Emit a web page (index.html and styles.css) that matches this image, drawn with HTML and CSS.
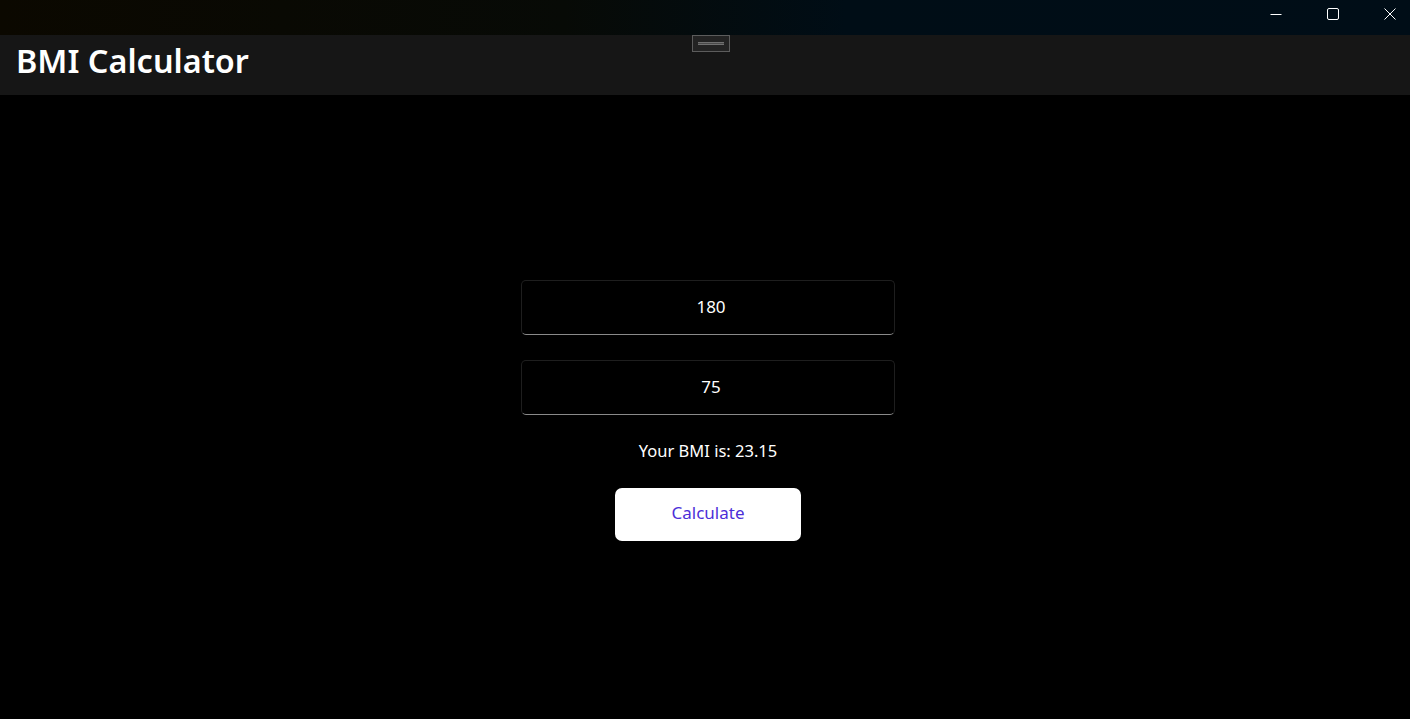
FILE: index.html
```html
<!DOCTYPE html>
<html lang="en">
<head>
<meta charset="utf-8">
<title>BMI Calculator</title>
<link rel="stylesheet" href="styles.css">
</head>
<body>
<div class="window">
  <div class="titlebar">
    <div class="caption-buttons">
      <button class="cap-btn" aria-label="Minimize">
        <svg width="12" height="12" viewBox="0 0 12 12"><path d="M0.5 6.5 H11.5" stroke="#fff" stroke-width="1" fill="none"/></svg>
      </button>
      <button class="cap-btn" aria-label="Maximize">
        <svg width="12" height="12" viewBox="0 0 12 12"><rect x="0.5" y="0.5" width="11" height="11" rx="1.5" stroke="#fff" stroke-width="1" fill="none"/></svg>
      </button>
      <button class="cap-btn" aria-label="Close">
        <svg width="12" height="12" viewBox="0 0 12 12"><path d="M0.5 0.5 L11.5 11.5 M11.5 0.5 L0.5 11.5" stroke="#fff" stroke-width="1" fill="none"/></svg>
      </button>
    </div>
  </div>
  <header class="appbar">
    <h1 class="app-title">BMI Calculator</h1>
    <div class="drag-handle"><span class="grip"></span></div>
  </header>
  <main class="content">
    <div class="form">
      <input class="field" type="text" value="180">
      <input class="field" type="text" value="75">
      <p class="result">Your BMI is: 23.15</p>
      <button class="calc-btn">Calculate</button>
    </div>
  </main>
</div>
</body>
</html>
```

FILE: styles.css
```css
* { box-sizing: border-box; }
html, body {
  margin: 0;
  padding: 0;
  background: #000;
  height: 100%;
  overflow: hidden;
}
body {
  font-family: "Noto Sans", "Open Sans", sans-serif;
  color: #fff;
}
.window {
  display: flex;
  flex-direction: column;
  height: 100%;
}
.titlebar {
  height: 35px;
  flex: none;
  background: linear-gradient(90deg, #0b0800 0%, #070a06 40%, #000d16 60%, #000d17 100%);
  display: flex;
  justify-content: flex-end;
}
.caption-buttons {
  display: flex;
  gap: 16px;
}
.cap-btn {
  width: 41px;
  height: 28px;
  border: 0;
  background: transparent;
  display: flex;
  align-items: center;
  justify-content: center;
  padding: 0;
}
.appbar {
  position: relative;
  height: 60px;
  flex: none;
  background: #161616;
  display: flex;
  align-items: center;
  padding-left: 16px;
}
.app-title {
  margin: 0;
  font-size: 32.4px;
  font-weight: 600;
  line-height: 1;
  margin-top: -9px;
  letter-spacing: 0;
}
.drag-handle {
  position: absolute;
  left: 692px;
  top: 0;
  width: 38px;
  height: 17px;
  border: 1px solid #5c5c5c;
  background: #232323;
  display: flex;
  align-items: center;
  justify-content: center;
}
.grip {
  width: 26px;
  height: 3px;
  border-top: 1px solid #707070;
  border-bottom: 1px solid #707070;
  background: #4a4a4a;
}
.content {
  flex: 1;
  display: flex;
  justify-content: center;
  padding-top: 185px;
  padding-left: 6px;
}
.form {
  width: 374px;
  display: flex;
  flex-direction: column;
  align-items: center;
}
.field {
  width: 374px;
  height: 55px;
  background: #000;
  border: 1px solid #1e1e1e;
  border-bottom: 1px solid #8a8a8a;
  border-radius: 5px;
  color: #fff;
  font-family: inherit;
  font-size: 17px;
  text-align: center;
  outline: none;
  margin: 0 0 25px 0;
  padding: 0 0 3px 6px;
}
.field + .field { margin-bottom: 24px; }
.result {
  margin: 0 0 25px 0;
  font-size: 16.5px;
  line-height: 24px;
}
.calc-btn {
  width: 186px;
  height: 53px;
  border: 0;
  border-radius: 7px;
  background: #fff;
  color: #4c2ed8;
  font-family: inherit;
  font-size: 17px;
  padding: 0 0 4px 0;
}
```
